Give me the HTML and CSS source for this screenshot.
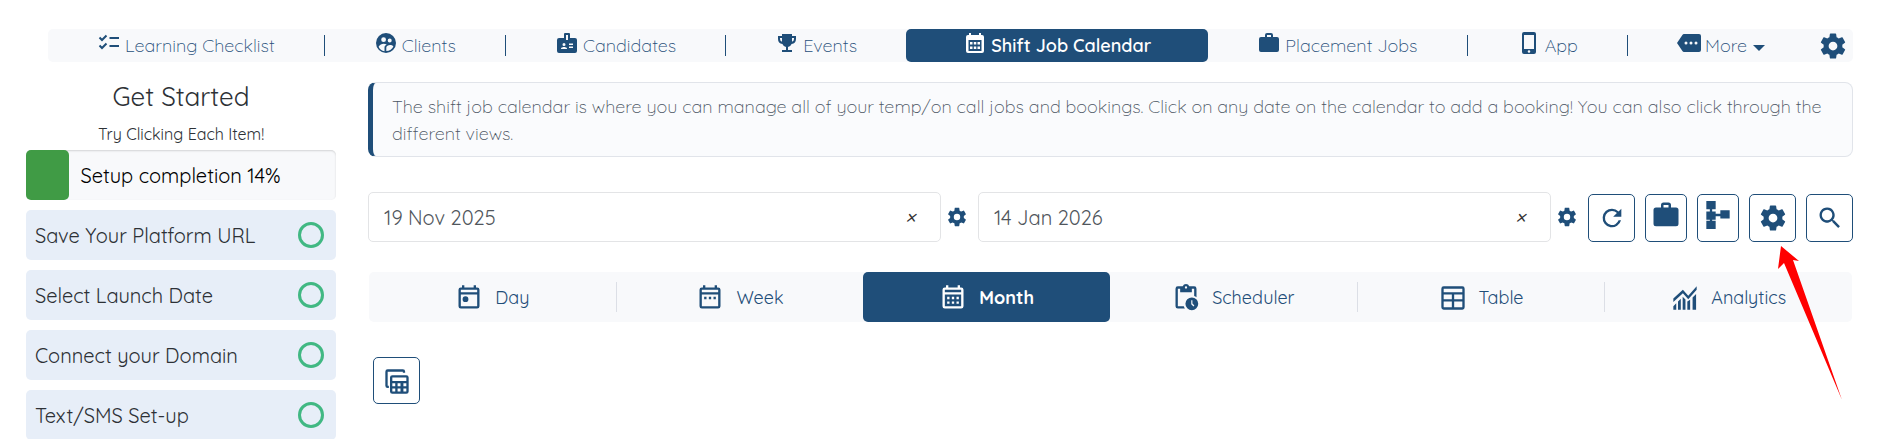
FILE: index.html
```html
<!DOCTYPE html>
<html lang="en">
<head>
    <meta charset="UTF-8">
    <meta name="viewport" content="width=device-width, initial-scale=1.0">
    <title>Shift Job Calendar</title>
    <link rel="stylesheet" href="styles.css">
</head>
<body>

    <!-- Icon set -->
    <svg class="sprite" aria-hidden="true">
        <symbol id="i-cog" viewBox="0 0 24 24"><path d="M12,15.5A3.5,3.5 0 0,1 8.5,12A3.5,3.5 0 0,1 12,8.5A3.5,3.5 0 0,1 15.5,12A3.5,3.5 0 0,1 12,15.5M19.43,12.97C19.47,12.65 19.5,12.33 19.5,12C19.5,11.67 19.47,11.34 19.43,11L21.54,9.37C21.73,9.22 21.78,8.95 21.66,8.73L19.66,5.27C19.54,5.05 19.27,4.96 19.05,5.05L16.56,6.05C16.04,5.66 15.5,5.32 14.87,5.07L14.5,2.42C14.46,2.18 14.25,2 14,2H10C9.75,2 9.54,2.18 9.5,2.42L9.13,5.07C8.5,5.32 7.96,5.66 7.44,6.05L4.95,5.05C4.73,4.96 4.46,5.05 4.34,5.27L2.34,8.73C2.21,8.95 2.27,9.22 2.46,9.37L4.57,11C4.53,11.34 4.5,11.67 4.5,12C4.5,12.33 4.53,12.65 4.57,12.97L2.46,14.63C2.27,14.78 2.21,15.05 2.34,15.27L4.34,18.73C4.46,18.95 4.73,19.03 4.95,18.95L7.44,17.94C7.96,18.34 8.5,18.68 9.13,18.93L9.5,21.58C9.54,21.82 9.75,22 10,22H14C14.25,22 14.46,21.82 14.5,21.58L14.87,18.93C15.5,18.67 16.04,18.34 16.56,17.94L19.05,18.95C19.27,19.03 19.54,18.95 19.66,18.73L21.66,15.27C21.78,15.05 21.73,14.78 21.54,14.63L19.43,12.97Z"/></symbol>
        <symbol id="i-checks" viewBox="0 0 24 24"><path d="M12.5 7H22M12.5 15H22M2.5 6.5L5 9L9.5 4.5M2.5 14.5L5 17L9.5 12.5" fill="none" stroke="currentColor" stroke-width="2"/></symbol>
        <symbol id="i-clients" viewBox="0 0 24 24"><path fill-rule="evenodd" d="M12 2a10 10 0 1 0 0 20a10 10 0 0 0 0-20zM9.6 6.3a2.4 2.4 0 1 1 0 4.8a2.4 2.4 0 0 1 0-4.8zM15.7 7.6a2 2 0 1 1 0 4a2 2 0 0 1 0-4zM9.6 12.8c1 0 2.2.3 3.1.8c-1.5.8-2.2 1.9-2.2 2.8v3.8c-2.6-.4-4.9-2.1-5.9-4.5c1-1.9 3.3-2.9 5-2.9zM12.3 20.1v-3.6c0-1.4 2-2.4 3.7-2.4c1.2 0 2.7.5 3.4 1.3c-1.2 2.6-3.8 4.7-7.1 4.7z"/></symbol>
        <symbol id="i-badge" viewBox="0 0 24 24"><path fill-rule="evenodd" d="M10 2h4a1 1 0 0 1 1 1v4h5a2 2 0 0 1 2 2v11a2 2 0 0 1-2 2H4a2 2 0 0 1-2-2V9a2 2 0 0 1 2-2h5V3a1 1 0 0 1 1-1zM11 4v5h2V4zM9 12a1.5 1.5 0 1 0 0 3a1.5 1.5 0 0 0 0-3zM6 18h6v-.6c0-1-2-1.5-3-1.5s-3 .5-3 1.500zM14 12.500v1.500h4v-1.500zM14 15.500v1.500h4v-1.500z"/></symbol>
        <symbol id="i-trophy" viewBox="0 0 24 24"><path fill-rule="evenodd" d="M7 3h10v2h4v3a5 5 0 0 1-4.400 4.900A5 5 0 0 1 13 15.900V19h4v2H7v-2h4v-3.100A5 5 0 0 1 7.400 12.900A5 5 0 0 1 3 8V5h4zM5 7v1a3 3 0 0 0 2 2.800V7zM17 10.800A3 3 0 0 0 19 8V7h-2z"/></symbol>
        <symbol id="i-month-solid" viewBox="0 0 24 24"><path fill-rule="evenodd" d="M6 2h2v2h8V2h2v2h1a2 2 0 0 1 2 2v14a2 2 0 0 1-2 2H5a2 2 0 0 1-2-2V6a2 2 0 0 1 2-2h1zM5.500 9v11h13V9zM7 11h2.500v2.500H7zM10.800 11h2.500v2.500h-2.500zM14.500 11H17v2.500h-2.500zM7 15.500h2.500V18H7zM10.800 15.500h2.500V18h-2.500zM14.500 15.500H17V18h-2.500z"/></symbol>
        <symbol id="i-briefcase" viewBox="0 0 24 24"><path fill-rule="evenodd" d="M10 2h4a2 2 0 0 1 2 2v2h4a2 2 0 0 1 2 2v11a2 2 0 0 1-2 2H4a2 2 0 0 1-2-2V8a2 2 0 0 1 2-2h4V4a2 2 0 0 1 2-2zM10 4v2h4V4z"/></symbol>
        <symbol id="i-phone" viewBox="0 0 24 24"><path fill-rule="evenodd" d="M7 1h10a2 2 0 0 1 2 2v18a2 2 0 0 1-2 2H7a2 2 0 0 1-2-2V3a2 2 0 0 1 2-2zM7 4v14h10V4zM12 19.200a1.300 1.300 0 1 0 0 2.600a1.300 1.300 0 0 0 0-2.600z"/></symbol>
        <symbol id="i-more" viewBox="0 0 24 24"><path fill-rule="evenodd" d="M22 3H7c-.7 0-1.200.35-1.600.9L0 12l5.400 8.100c.4.500.9.900 1.600.900h15a2 2 0 0 0 2-2V5a2 2 0 0 0-2-2zM9 10.500a1.500 1.500 0 1 1 0 3a1.500 1.500 0 0 1 0-3zM14 10.500a1.500 1.500 0 1 1 0 3a1.500 1.500 0 0 1 0-3zM19 10.500a1.500 1.500 0 1 1 0 3a1.500 1.500 0 0 1 0-3z"/></symbol>
        <symbol id="i-refresh" viewBox="0 0 24 24"><path d="M17.650 6.350A7.958 7.958 0 0 0 12 4a8 8 0 1 0 7.730 10h-2.080A6 6 0 1 1 12 6c1.660 0 3.140.690 4.220 1.780L13 11h7V4z"/></symbol>
        <symbol id="i-tree" viewBox="0 0 24 24"><path d="M2 0h8v7H7v2h3v2h4V8h8v7h-8v-2h-4v3H7v1h3v7H2v-7h3v-1H2V9h3V7H2z"/></symbol>
        <symbol id="i-search" viewBox="0 0 24 24"><path d="M9.500 3a6.500 6.500 0 0 1 4.940 10.730l.270.270h.790l5 5l-1.500 1.500l-5-5v-.790l-.270-.270A6.500 6.500 0 1 1 9.500 3m0 2a4.500 4.500 0 1 0 0 9a4.500 4.500 0 0 0 0-9z"/></symbol>
        <symbol id="i-day" viewBox="0 0 24 24"><path fill-rule="evenodd" d="M6 1h2v2h8V1h2v2h1a2 2 0 0 1 2 2v14a2 2 0 0 1-2 2H5a2 2 0 0 1-2-2V5a2 2 0 0 1 2-2h1zM5 5v2h14V5zM5 9v10h14V9zM9 10.500a2.500 2.500 0 1 1 0 5a2.500 2.500 0 0 1 0-5z"/></symbol>
        <symbol id="i-week" viewBox="0 0 24 24"><path fill-rule="evenodd" d="M6 1h2v2h8V1h2v2h1a2 2 0 0 1 2 2v14a2 2 0 0 1-2 2H5a2 2 0 0 1-2-2V5a2 2 0 0 1 2-2h1zM5 5v2h14V5zM5 9v10h14V9zM7 11h2v2H7zM11 11h2v2h-2zM15 11h2v2h-2z"/></symbol>
        <symbol id="i-month" viewBox="0 0 24 24"><path fill-rule="evenodd" d="M6 1h2v2h8V1h2v2h1a2 2 0 0 1 2 2v14a2 2 0 0 1-2 2H5a2 2 0 0 1-2-2V5a2 2 0 0 1 2-2h1zM5 5v2h14V5zM5 9v10h14V9zM7 11h2v2H7zM11 11h2v2h-2zM15 11h2v2h-2zM7 15h2v2H7zM11 15h2v2h-2zM15 15h2v2h-2z"/></symbol>
        <symbol id="i-scheduler" viewBox="0 0 24 24"><path fill-rule="evenodd" d="M17 11.500a5.500 5.500 0 1 0 0 11a5.500 5.500 0 0 0 0-11zM16.500 14h1v2.800l1.700 1.700l-.8.800l-1.900-2z"/><path fill-rule="evenodd" d="M19 2h-4.200a3 3 0 0 0-5.600 0H5a2 2 0 0 0-2 2v15a2 2 0 0 0 2 2h6.100a7 7 0 0 1-1-2H5V4h2v3h10V4h2v6.300c.7.200 1.400.5 2 1V4a2 2 0 0 0-2-2zM12 2a1 1 0 1 1 0 2a1 1 0 0 1 0-2z"/></symbol>
        <symbol id="i-table" viewBox="0 0 24 24"><path fill-rule="evenodd" d="M4 2h16a2 2 0 0 1 2 2v16a2 2 0 0 1-2 2H4a2 2 0 0 1-2-2V4a2 2 0 0 1 2-2zM4 4v3h16V4zM4 9v4h7V9zM13 9v4h7V9zM4 15v5h7v-5zM13 15v5h7v-5z"/></symbol>
        <symbol id="i-analytics" viewBox="0 0 24 24"><path d="M2 12.500l8.200-7.500l4.600 5L22 2v3l-7.200 8l-4.600-5L2 15.500zM2 19l2.500-2.500V22H2zM6 15l2.400-2.300V22H6zM10 11l2.400 2.300V22H10zM14 15l2.400-1.500V22H14zM18.500 11.500L21.500 8.500V22h-3z"/></symbol>
        <symbol id="i-table-multi" viewBox="0 0 24 24"><path fill-rule="evenodd" d="M19 4a2 2 0 0 0-2-2H4a2 2 0 0 0-2 2v12a2 2 0 0 0 2 2h1v-2H4V4h13v1h2zM8 7h12a2 2 0 0 1 2 2v12a2 2 0 0 1-2 2H8a2 2 0 0 1-2-2V9a2 2 0 0 1 2-2zM8 9v3h12V9zM8 14v2.500h2.500V14zM12.500 14v2.500H15V14zM17.500 14v2.500H20V14zM8 18.500V21h2.500v-2.500zM12.500 18.500V21H15v-2.500zM17.500 18.500V21H20v-2.500z"/></symbol>
    </svg>

    <nav class="top-nav">
        <a href="#" class="nav-item"><svg class="icon"><use href="#i-checks"/></svg>Learning Checklist</a>
        <a href="#" class="nav-item"><svg class="icon"><use href="#i-clients"/></svg>Clients</a>
        <a href="#" class="nav-item"><svg class="icon"><use href="#i-badge"/></svg>Candidates</a>
        <a href="#" class="nav-item no-line"><svg class="icon"><use href="#i-trophy"/></svg>Events</a>
        <a href="#" class="nav-item active"><svg class="icon"><use href="#i-month-solid"/></svg>Shift Job Calendar</a>
        <a href="#" class="nav-item"><svg class="icon"><use href="#i-briefcase"/></svg>Placement Jobs</a>
        <a href="#" class="nav-item"><svg class="icon"><use href="#i-phone"/></svg>App</a>
        <a href="#" class="nav-item no-line"><svg class="icon"><use href="#i-more"/></svg>More<span class="caret"></span></a>
        <button type="button" class="nav-settings" aria-label="Settings"><svg class="icon icon-lg"><use href="#i-cog"/></svg></button>
    </nav>

    <div class="page">
        <aside class="sidebar">
            <h1>Get Started</h1>
            <p class="hint">Try Clicking Each Item!</p>
            <div class="progress">
                <div class="progress-fill" style="width: 14%"></div>
                <span>Setup completion 14%</span>
            </div>
            <a href="#" class="task">Save Your Platform URL<span class="circle"></span></a>
            <a href="#" class="task">Select Launch Date<span class="circle"></span></a>
            <a href="#" class="task">Connect your Domain<span class="circle"></span></a>
            <a href="#" class="task">Text/SMS Set-up<span class="circle"></span></a>
        </aside>

        <main>
            <p class="info">The shift job calendar is where you can manage all of your temp/on call jobs and bookings. Click on any date on the calendar to add a booking! You can also click through the different views.</p>

            <div class="filters">
                <div class="date-field">
                    <input type="text" value="19 Nov 2025" aria-label="Start date">
                    <button type="button" class="clear" aria-label="Clear start date">×</button>
                </div>
                <button type="button" class="date-settings" aria-label="Start date settings"><svg class="icon"><use href="#i-cog"/></svg></button>
                <div class="date-field">
                    <input type="text" value="14 Jan 2026" aria-label="End date">
                    <button type="button" class="clear" aria-label="Clear end date">×</button>
                </div>
                <button type="button" class="date-settings" aria-label="End date settings"><svg class="icon"><use href="#i-cog"/></svg></button>
                <div class="tools">
                    <button type="button" class="tool" aria-label="Refresh"><svg class="icon icon-xl"><use href="#i-refresh"/></svg></button>
                    <button type="button" class="tool narrow" aria-label="Jobs"><svg class="icon icon-lg"><use href="#i-briefcase"/></svg></button>
                    <button type="button" class="tool narrow" aria-label="Structure"><svg class="icon icon-xl"><use href="#i-tree"/></svg></button>
                    <button type="button" class="tool" aria-label="Calendar settings"><svg class="icon icon-lg"><use href="#i-cog"/></svg></button>
                    <button type="button" class="tool" aria-label="Search"><svg class="icon icon-xl"><use href="#i-search"/></svg></button>
                </div>
            </div>

            <nav class="views">
                <a href="#" class="view"><svg class="icon icon-xl"><use href="#i-day"/></svg>Day</a>
                <a href="#" class="view no-line"><svg class="icon icon-xl"><use href="#i-week"/></svg>Week</a>
                <a href="#" class="view active"><svg class="icon icon-xl"><use href="#i-month"/></svg>Month</a>
                <a href="#" class="view"><svg class="icon icon-xl"><use href="#i-scheduler"/></svg>Scheduler</a>
                <a href="#" class="view"><svg class="icon icon-xl"><use href="#i-table"/></svg>Table</a>
                <a href="#" class="view no-line"><svg class="icon icon-xl"><use href="#i-analytics"/></svg>Analytics</a>
            </nav>

            <button type="button" class="tool copy" aria-label="Copy bookings"><svg class="icon icon-xl"><use href="#i-table-multi"/></svg></button>
        </main>
    </div>

    <!-- Pointer to the calendar settings button -->
    <svg class="arrow" viewBox="0 0 66 156" aria-hidden="true"><path d="M4 0L22 15L16 14L65 154L7 17L1 23Z"/></svg>

</body>
</html>
```

FILE: styles.css
```css
* {
    box-sizing: border-box;
}
body {
    margin: 0;
    padding: 29px 38px 0 26px;
    height: 100vh;
    overflow: hidden;
    position: relative;
    background: #fff;
    color: #2d3136;
    font-family: Quicksand, Lato, sans-serif;
    font-size: 18px;
    font-weight: 400;
    line-height: 27px;
}
a {
    color: inherit;
    text-decoration: none;
}
button {
    padding: 0;
    border: none;
    background: none;
    color: #1f4e79;
    font: inherit;
    cursor: pointer;
}
.sprite {
    display: none;
}
.icon {
    width: 24px;
    height: 24px;
    flex: none;
    fill: currentColor;
}
.icon-lg {
    width: 30px;
    height: 30px;
}
.icon-xl {
    width: 28px;
    height: 28px;
}

/* Top navigation */
.top-nav {
    display: flex;
    align-items: center;
    height: 33px;
    margin-left: 22px;
    background: #f8f9fb;
    border-radius: 5px;
    color: #1f4e79;
    font-weight: 350;
}
.nav-item {
    display: flex;
    flex: 1 1 auto;
    align-items: center;
    justify-content: center;
    gap: 4px;
    height: 21px;
    border-right: 1px solid #1f4e79;
    white-space: nowrap;
}
.nav-item .icon {
    margin-bottom: 6px;
}
.no-line {
    border-right: none;
}
.nav-item.active {
    height: 33px;
    padding: 0 8px;
    border: none;
    border-radius: 5px;
    background: #1f4e79;
    color: #fff;
    font-weight: 600;
}
.caret {
    margin: 4px 0 0 2px;
    border: 6px solid transparent;
    border-top-color: #1f4e79;
    border-bottom: none;
}
.nav-settings {
    display: flex;
    align-items: center;
    justify-content: center;
    width: 39px;
}

.page {
    display: flex;
    gap: 32px;
}

/* Setup checklist */
.sidebar {
    flex: 0 0 310px;
    padding-top: 20px;
}
.sidebar h1 {
    margin: 0;
    font-size: 26px;
    font-weight: 400;
    line-height: 30px;
    text-align: center;
}
.hint {
    margin: 9px 0 3px;
    font-size: 16px;
    line-height: 26px;
    text-align: center;
}
.progress {
    display: flex;
    align-items: center;
    height: 50px;
    border-radius: 5px;
    background: #f8f9fb;
    box-shadow: inset 0 1px 2px rgba(0, 0, 0, 0.15);
    color: #000;
    font-size: 20px;
}
.progress-fill {
    height: 100%;
    margin-right: 11px;
    border-radius: 5px;
    background: #409b45;
}
.task {
    display: flex;
    align-items: center;
    justify-content: space-between;
    height: 50px;
    margin-top: 10px;
    padding: 0 12px 0 9px;
    border-radius: 5px;
    background: #e7eef8;
    font-size: 20px;
}
.circle {
    width: 26px;
    height: 26px;
    border: 3px solid #41b883;
    border-radius: 50%;
}

main {
    flex: 1;
    min-width: 0;
    padding-top: 20px;
}
.info {
    margin: 0;
    padding: 10px 20px 9px 19px;
    border: 1px solid #e1e4ea;
    border-left: 5px solid #1f4e79;
    border-radius: 8px;
    background: #fafbfd;
    color: #4b5563;
    font-weight: 300;
}

/* Date range and tools */
.filters {
    display: flex;
    align-items: flex-end;
    margin-top: 35px;
}
.date-field {
    display: flex;
    flex: 1;
    height: 50px;
    border: 1px solid #e3e4e6;
    border-radius: 5px;
}
.date-field input {
    flex: 1;
    min-width: 0;
    padding: 0 15px;
    border: none;
    outline: none;
    background: none;
    color: #50565c;
    font: inherit;
    font-size: 20px;
}
.clear {
    width: 60px;
    color: #333;
    font-size: 22px;
    font-style: italic;
}
.date-settings {
    display: flex;
    align-items: center;
    width: 37px;
    height: 50px;
    padding-left: 5px;
}
.date-settings .icon {
    width: 22px;
    height: 22px;
}
.tools {
    display: flex;
    gap: 10px;
}
.tool {
    display: flex;
    align-items: center;
    justify-content: center;
    width: 47px;
    height: 48px;
    border: 1px solid #1f4e79;
    border-radius: 5px;
    background: #fff;
}
.tool.narrow {
    width: 42px;
}
.narrow .icon {
    margin-bottom: 6px;
}

/* Calendar views */
.views {
    display: flex;
    align-items: center;
    height: 50px;
    margin: 30px 1px 35px;
    border-radius: 5px;
    background: #f8f9fb;
    color: #1f4e79;
}
.view {
    display: flex;
    flex: 1;
    align-items: center;
    justify-content: center;
    gap: 12px;
    height: 30px;
    border-right: 1px solid #dcdfe6;
}
.view .icon {
    margin-top: 2px;
}
.view.no-line {
    border-right: none;
}
.view.active {
    height: 50px;
    border: none;
    border-radius: 5px;
    background: #1f4e79;
    color: #fff;
    font-weight: 700;
}
.copy {
    height: 47px;
    margin-left: 5px;
}

/* Sits over the tools and view tabs */
.arrow {
    position: absolute;
    top: 246px;
    right: 48px;
    width: 66px;
    height: 156px;
    fill: #f00;
}
```
